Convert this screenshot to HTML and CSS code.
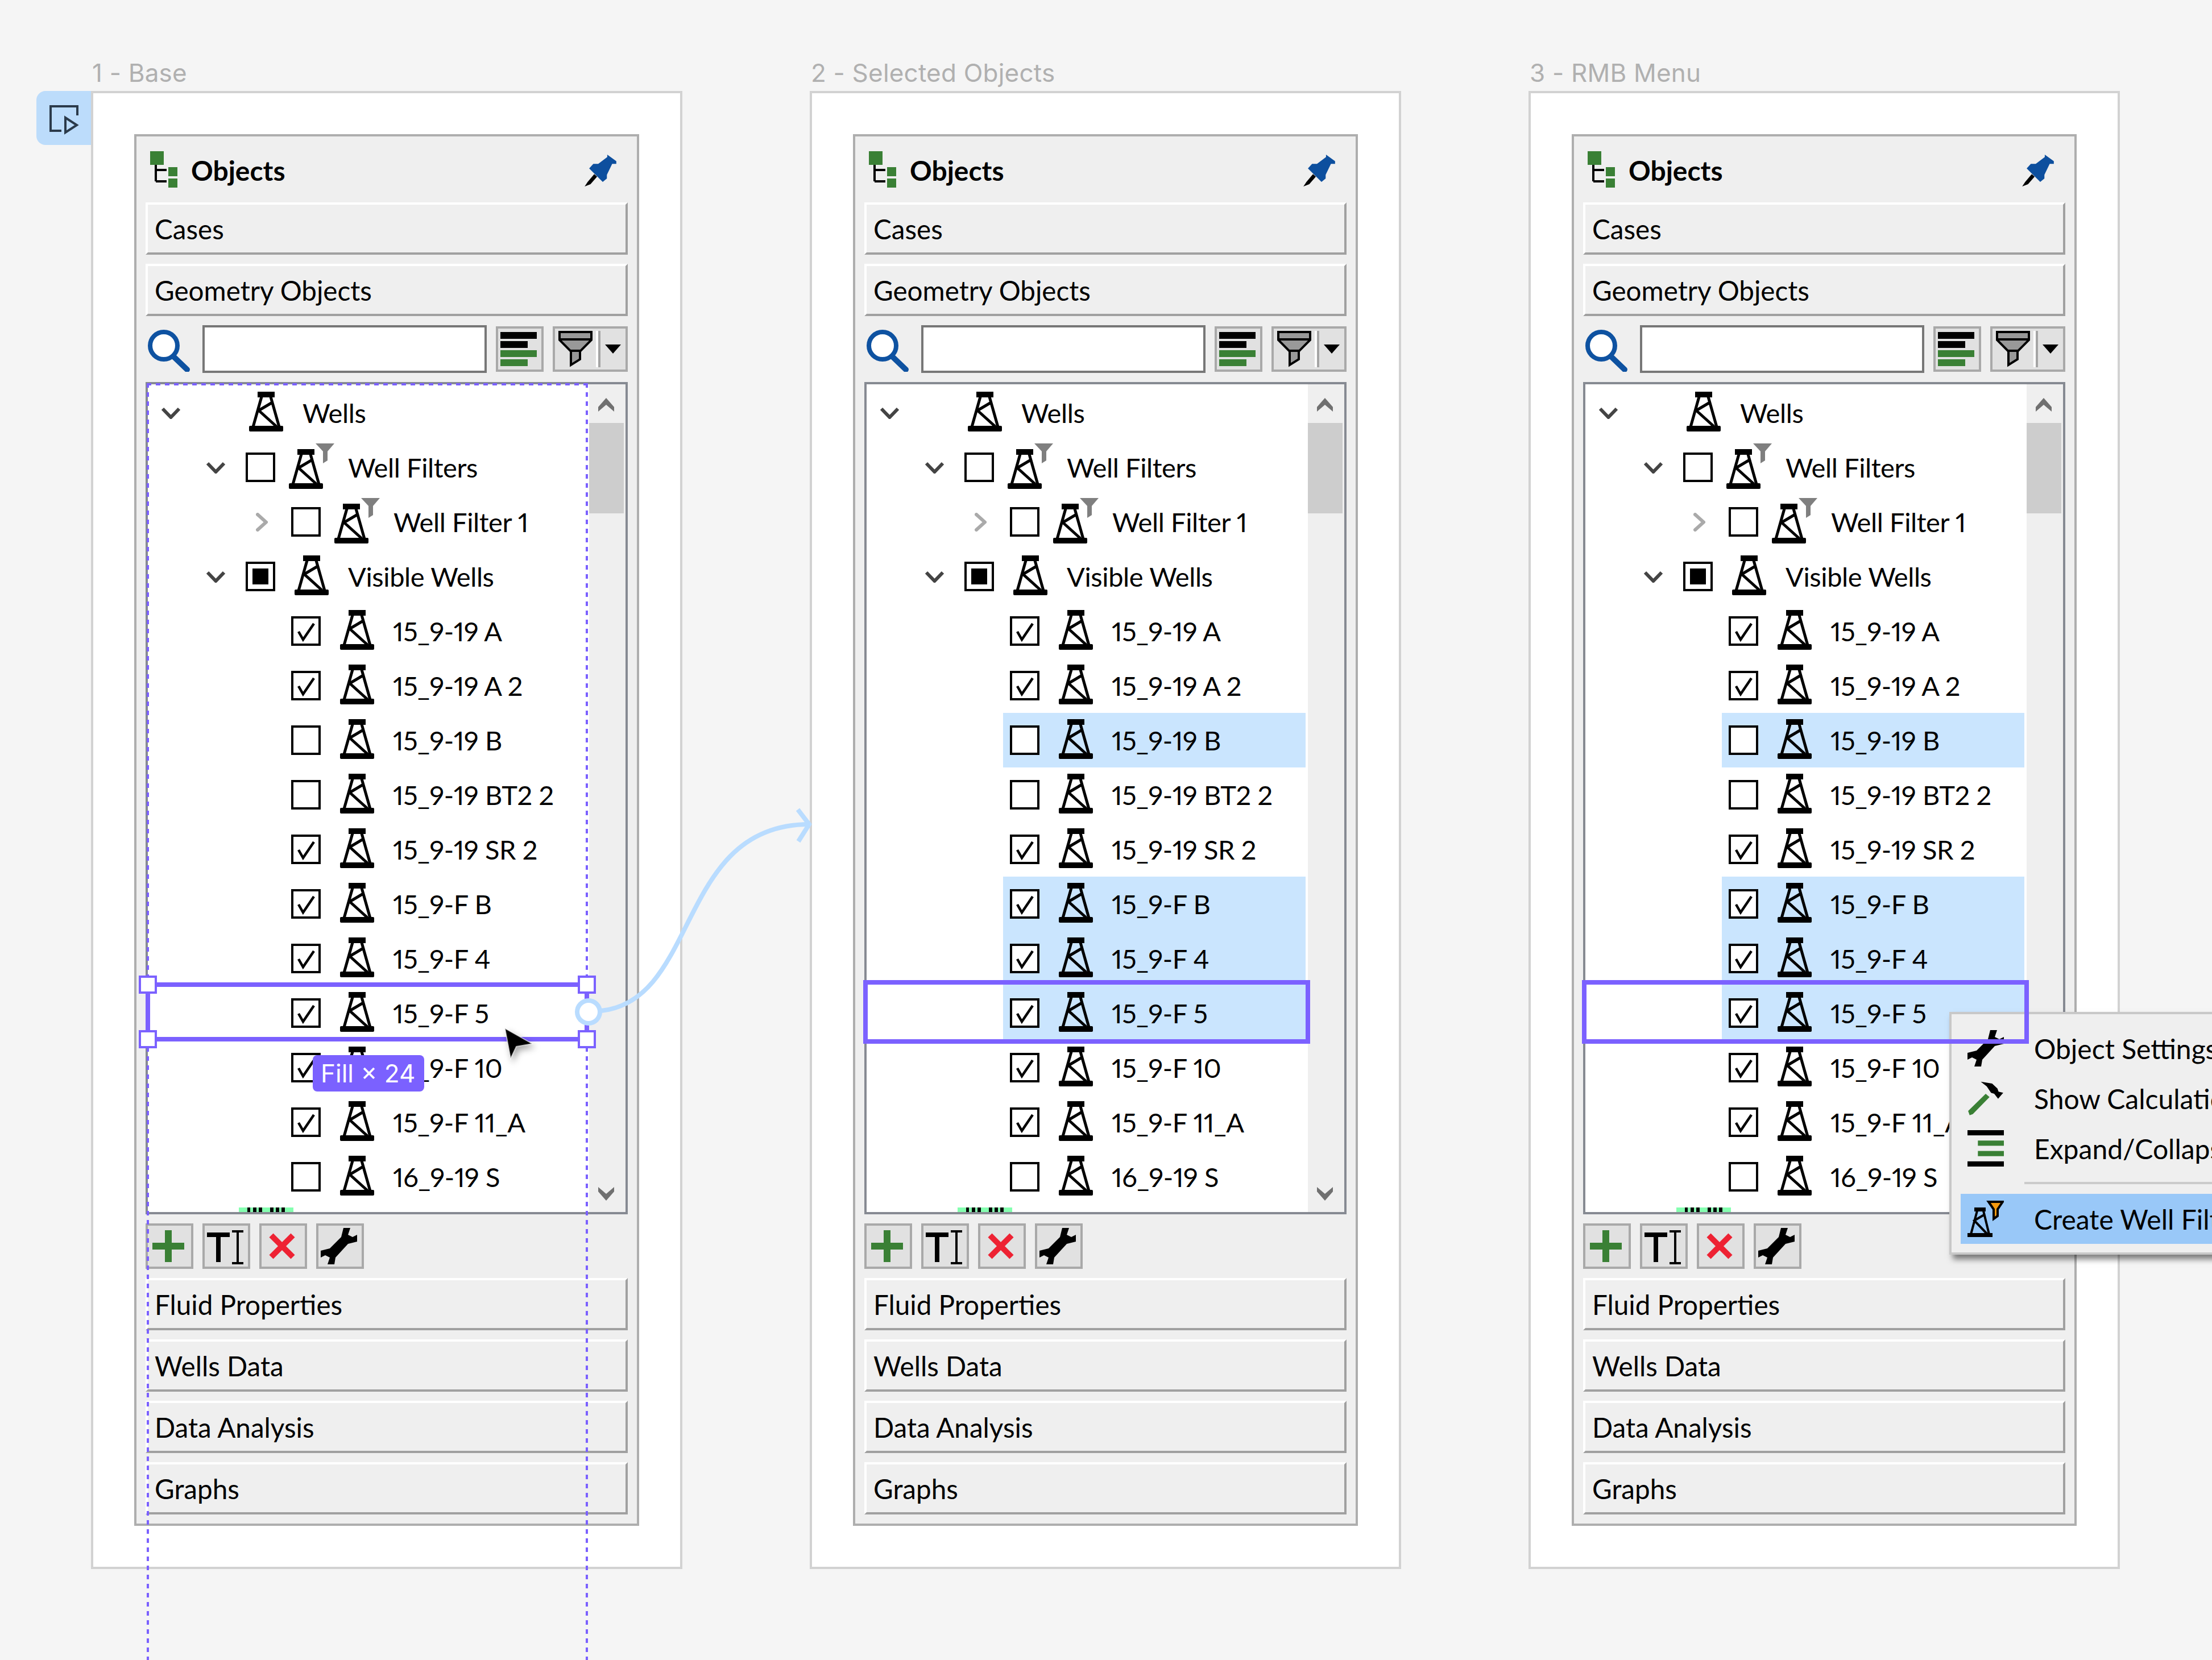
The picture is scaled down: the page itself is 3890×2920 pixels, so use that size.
FILE: index.html
```html
<!DOCTYPE html>
<html lang="en">
<head>
<meta charset="utf-8">
<title>Objects panel</title>
<link rel="stylesheet" href="styles.css">
</head>
<body>
<svg class="defs" width="0" height="0" aria-hidden="true">
  <symbol id="well" viewBox="0 0 60 70">
    <rect x="15" y="0" width="30" height="10"/>
    <rect x="0" y="60" width="60" height="10" rx="2"/>
    <path d="M22 9 7 62M38 9 53 62M39 20 17 33 48 61" fill="none" stroke="#000" stroke-width="5"/>
  </symbol>
  <symbol id="chk" viewBox="0 0 44 44"><path d="M9 23 17 37 36 9" fill="none" stroke="#000" stroke-width="4.500"/></symbol>
  <symbol id="down" viewBox="0 0 35 21"><path d="M3 3 17.500 18 32 3" fill="none" stroke="#444" stroke-width="6"/></symbol>
  <symbol id="right" viewBox="0 0 21 33"><path d="M3 3 18 16.500 3 30" fill="none" stroke="#aaa" stroke-width="6" stroke-linecap="round"/></symbol>
  <symbol id="funnelbadge" viewBox="0 0 33 35"><path d="M0 0H33L21 14V30L13 35V14Z" fill="#7f7f7f"/></symbol>
  <symbol id="wrench" viewBox="942 360 192 192"><path d="M1062 360H1098L1086 396 1110 408 1134 396V432L1086 444 1020 516 1014 552H978L990 516 966 504 942 516V480L990 468 1050 408Z"/></symbol>
  <symbol id="objicon" viewBox="0 0 48 64">
    <path d="M10 20V53M10 33H29M10 53H29" fill="none" stroke="#000" stroke-width="4"/>
    <rect width="24" height="24" fill="#3a8035"/><rect x="32" y="28" width="16" height="16" fill="#3a8035"/><rect x="32" y="48" width="16" height="16" fill="#3a8035"/>
  </symbol>
  <symbol id="pin" viewBox="684 155 168 169">
    <path d="M804 155 852 190V204H830L802 262V282L780 300 708 228 730 204H756L804 168Z" fill="#0d4f9e"/>
    <path d="M735 258 700 300 684 324 715 312 750 272Z"/>
  </symbol>
  <symbol id="lens" viewBox="0 0 74 74">
    <circle cx="28" cy="28" r="24" fill="#fff" stroke="#0e52a1" stroke-width="8"/>
    <path d="M45 47 69 70" stroke="#0e52a1" stroke-width="10" stroke-linecap="round"/>
  </symbol>
  <symbol id="bars" viewBox="0 0 64 60">
    <rect width="64" height="12"/><rect y="16" width="48" height="12"/>
    <rect y="32" width="64" height="12" fill="#3a8035"/><rect y="48" width="48" height="12" fill="#3a8035"/>
  </symbol>
  <symbol id="funnel" viewBox="0 0 60 64">
    <path d="M2 2H58V16L38 36V50L22 60V36L2 16Z" fill="#999" stroke="#000" stroke-width="4"/>
    <path d="M0 15H60M20 35H40" stroke="#000" stroke-width="4"/>
  </symbol>
  <symbol id="hammer" viewBox="425 600 170 162">
    <path d="M487 603 540 612 565 635 570 650 592 655 568 683 550 660 535 655 515 625Z"/>
    <path d="M510 660 528 675 450 755 435 760 428 740Z" fill="#3a8035"/>
  </symbol>
  <symbol id="expand" viewBox="0 0 56 56">
    <rect width="56" height="8"/><rect y="48" width="56" height="8"/>
    <rect x="16" y="16" width="40" height="8" fill="#3a8035"/><rect x="16" y="32" width="40" height="8" fill="#3a8035"/>
  </symbol>
  <symbol id="wellfilter" viewBox="0 0 64 64">
    <g transform="translate(0 12)"><rect x="12" width="20" height="7"/><rect y="45" width="44" height="7"/><path d="M17 6 6 47M28 6 38 47M29 13 12 23 34 46" fill="none" stroke="#000" stroke-width="4"/></g>
    <path d="M37 2H62L53 15V27L46 32V15Z" fill="#f59a10" stroke="#000" stroke-width="4"/>
  </symbol>
  <symbol id="plus" viewBox="0 0 76 72"><path d="M30 8H42V30H64V42H42V64H30V42H8V30H30Z" fill="#3a8035"/></symbol>
  <symbol id="rename" viewBox="0 0 76 72"><path d="M4 12H44V20H28V64H20V20H4ZM48 8H68V12H60V64H68V68H48V64H56V12H48Z"/></symbol>
  <symbol id="del" viewBox="0 0 76 72"><path d="M17 17 55 55M55 17 17 55" stroke="#ee2233" stroke-width="10" fill="none"/></symbol>
</svg>

<div class="canvas">

  <section class="col">
    <h2 class="title">1 - Base</h2>
    <div class="frame">
      <div class="tab"><svg width="96" height="96" viewBox="64 160 96 96"><path d="M136 203V187H89V230H108" fill="none" stroke="#2b3a4a" stroke-width="4"/><path d="M115 207V233L135 220Z" fill="none" stroke="#2b3a4a" stroke-width="4"/></svg></div>
      <div class="panel">
        <div class="head"><svg class="objicon"><use href="#objicon"/></svg><span class="head-t">Objects</span><svg class="pin"><use href="#pin"/></svg></div>
        <div class="sect">Cases</div>
        <div class="sect">Geometry Objects</div>
        <div class="search">
          <svg class="lens"><use href="#lens"/></svg><div class="input"></div>
          <div class="tbtn w84"><svg class="bars"><use href="#bars"/></svg></div>
          <div class="tbtn w132"><svg class="funnel"><use href="#funnel"/></svg><i class="vsep"></i><i class="tri"></i></div>
        </div>
        <div class="tree">
          <div class="list">
            <div class="row lv0"><svg class="ch"><use href="#down"/></svg><svg class="wl"><use href="#well"/></svg><span class="lb">Wells</span></div>
            <div class="row lv1"><svg class="ch"><use href="#down"/></svg><i class="cb"></i><span class="wb"><svg class="wl"><use href="#well"/></svg><svg class="fb"><use href="#funnelbadge"/></svg></span><span class="lb">Well Filters</span></div>
            <div class="row lv2"><svg class="cr"><use href="#right"/></svg><i class="cb"></i><span class="wb"><svg class="wl"><use href="#well"/></svg><svg class="fb"><use href="#funnelbadge"/></svg></span><span class="lb">Well Filter 1</span></div>
            <div class="row lv3"><svg class="ch"><use href="#down"/></svg><i class="cb tri-s"></i><svg class="wl"><use href="#well"/></svg><span class="lb">Visible Wells</span></div>
            <div class="row lf"><i class="cb"><svg><use href="#chk"/></svg></i><svg class="wl"><use href="#well"/></svg><span class="lb">15_9-19 A</span></div>
            <div class="row lf"><i class="cb"><svg><use href="#chk"/></svg></i><svg class="wl"><use href="#well"/></svg><span class="lb">15_9-19 A 2</span></div>
            <div class="row lf"><i class="cb"></i><svg class="wl"><use href="#well"/></svg><span class="lb">15_9-19 B</span></div>
            <div class="row lf"><i class="cb"></i><svg class="wl"><use href="#well"/></svg><span class="lb">15_9-19 BT2 2</span></div>
            <div class="row lf"><i class="cb"><svg><use href="#chk"/></svg></i><svg class="wl"><use href="#well"/></svg><span class="lb">15_9-19 SR 2</span></div>
            <div class="row lf"><i class="cb"><svg><use href="#chk"/></svg></i><svg class="wl"><use href="#well"/></svg><span class="lb">15_9-F B</span></div>
            <div class="row lf"><i class="cb"><svg><use href="#chk"/></svg></i><svg class="wl"><use href="#well"/></svg><span class="lb">15_9-F 4</span></div>
            <div class="row lf"><i class="cb"><svg><use href="#chk"/></svg></i><svg class="wl"><use href="#well"/></svg><span class="lb">15_9-F 5</span></div>
            <div class="row lf"><i class="cb"><svg><use href="#chk"/></svg></i><svg class="wl"><use href="#well"/></svg><span class="lb">15_9-F 10</span></div>
            <div class="row lf"><i class="cb"><svg><use href="#chk"/></svg></i><svg class="wl"><use href="#well"/></svg><span class="lb">15_9-F 11_A</span></div>
            <div class="row lf"><i class="cb"></i><svg class="wl"><use href="#well"/></svg><span class="lb">16_9-19 S</span></div>
          </div>
          <div class="sbar"><svg class="sup" viewBox="0 0 28 24"><path d="M0 16 14 0 28 16V24L14 12 0 24Z"/></svg><div class="thumb"></div><svg class="sdn" viewBox="0 0 28 24"><path d="M0 8 14 24 28 8V0L14 12 0 0Z"/></svg></div>
          <div class="grip"></div>
          <div class="guide"></div>
          <div class="rowline"></div>
          <i class="hd h-tl"></i><i class="hd h-tr"></i><i class="hd h-bl"></i><i class="hd h-br"></i>
          <div class="tip">Fill × 24</div>
          <svg class="cursor" viewBox="0 0 60 64"><path d="M8 5 56 32 28 37 18 58Z" fill="#000" stroke="#fff" stroke-opacity=".6" stroke-width="2"/></svg>
        </div>
        <div class="acts">
          <div class="tbtn w84"><svg class="ai"><use href="#plus"/></svg></div>
          <div class="tbtn w84"><svg class="ai"><use href="#rename"/></svg></div>
          <div class="tbtn w84"><svg class="ai"><use href="#del"/></svg></div>
          <div class="tbtn w84"><svg class="aw"><use href="#wrench"/></svg></div>
        </div>
        <div class="sect">Fluid Properties</div>
        <div class="sect">Wells Data</div>
        <div class="sect">Data Analysis</div>
        <div class="sect">Graphs</div>
      </div>
    </div>
  </section>

  <section class="col">
    <h2 class="title">2 - Selected Objects</h2>
    <div class="frame">
      <div class="panel">
        <div class="head"><svg class="objicon"><use href="#objicon"/></svg><span class="head-t">Objects</span><svg class="pin"><use href="#pin"/></svg></div>
        <div class="sect">Cases</div>
        <div class="sect">Geometry Objects</div>
        <div class="search">
          <svg class="lens"><use href="#lens"/></svg><div class="input"></div>
          <div class="tbtn w84"><svg class="bars"><use href="#bars"/></svg></div>
          <div class="tbtn w132"><svg class="funnel"><use href="#funnel"/></svg><i class="vsep"></i><i class="tri"></i></div>
        </div>
        <div class="tree">
          <div class="list">
            <div class="row lv0"><svg class="ch"><use href="#down"/></svg><svg class="wl"><use href="#well"/></svg><span class="lb">Wells</span></div>
            <div class="row lv1"><svg class="ch"><use href="#down"/></svg><i class="cb"></i><span class="wb"><svg class="wl"><use href="#well"/></svg><svg class="fb"><use href="#funnelbadge"/></svg></span><span class="lb">Well Filters</span></div>
            <div class="row lv2"><svg class="cr"><use href="#right"/></svg><i class="cb"></i><span class="wb"><svg class="wl"><use href="#well"/></svg><svg class="fb"><use href="#funnelbadge"/></svg></span><span class="lb">Well Filter 1</span></div>
            <div class="row lv3"><svg class="ch"><use href="#down"/></svg><i class="cb tri-s"></i><svg class="wl"><use href="#well"/></svg><span class="lb">Visible Wells</span></div>
            <div class="row lf"><i class="cb"><svg><use href="#chk"/></svg></i><svg class="wl"><use href="#well"/></svg><span class="lb">15_9-19 A</span></div>
            <div class="row lf"><i class="cb"><svg><use href="#chk"/></svg></i><svg class="wl"><use href="#well"/></svg><span class="lb">15_9-19 A 2</span></div>
            <div class="row lf sel"><i class="cb"></i><svg class="wl"><use href="#well"/></svg><span class="lb">15_9-19 B</span></div>
            <div class="row lf"><i class="cb"></i><svg class="wl"><use href="#well"/></svg><span class="lb">15_9-19 BT2 2</span></div>
            <div class="row lf"><i class="cb"><svg><use href="#chk"/></svg></i><svg class="wl"><use href="#well"/></svg><span class="lb">15_9-19 SR 2</span></div>
            <div class="row lf sel"><i class="cb"><svg><use href="#chk"/></svg></i><svg class="wl"><use href="#well"/></svg><span class="lb">15_9-F B</span></div>
            <div class="row lf sel"><i class="cb"><svg><use href="#chk"/></svg></i><svg class="wl"><use href="#well"/></svg><span class="lb">15_9-F 4</span></div>
            <div class="row lf sel"><i class="cb"><svg><use href="#chk"/></svg></i><svg class="wl"><use href="#well"/></svg><span class="lb">15_9-F 5</span></div>
            <div class="row lf"><i class="cb"><svg><use href="#chk"/></svg></i><svg class="wl"><use href="#well"/></svg><span class="lb">15_9-F 10</span></div>
            <div class="row lf"><i class="cb"><svg><use href="#chk"/></svg></i><svg class="wl"><use href="#well"/></svg><span class="lb">15_9-F 11_A</span></div>
            <div class="row lf"><i class="cb"></i><svg class="wl"><use href="#well"/></svg><span class="lb">16_9-19 S</span></div>
          </div>
          <div class="sbar"><svg class="sup" viewBox="0 0 28 24"><path d="M0 16 14 0 28 16V24L14 12 0 24Z"/></svg><div class="thumb"></div><svg class="sdn" viewBox="0 0 28 24"><path d="M0 8 14 24 28 8V0L14 12 0 0Z"/></svg></div>
          <div class="grip"></div>
          <div class="rowbox"></div>
        </div>
        <div class="acts">
          <div class="tbtn w84"><svg class="ai"><use href="#plus"/></svg></div>
          <div class="tbtn w84"><svg class="ai"><use href="#rename"/></svg></div>
          <div class="tbtn w84"><svg class="ai"><use href="#del"/></svg></div>
          <div class="tbtn w84"><svg class="aw"><use href="#wrench"/></svg></div>
        </div>
        <div class="sect">Fluid Properties</div>
        <div class="sect">Wells Data</div>
        <div class="sect">Data Analysis</div>
        <div class="sect">Graphs</div>
      </div>
    </div>
  </section>

  <section class="col">
    <h2 class="title">3 - RMB Menu</h2>
    <div class="frame">
      <div class="panel">
        <div class="head"><svg class="objicon"><use href="#objicon"/></svg><span class="head-t">Objects</span><svg class="pin"><use href="#pin"/></svg></div>
        <div class="sect">Cases</div>
        <div class="sect">Geometry Objects</div>
        <div class="search">
          <svg class="lens"><use href="#lens"/></svg><div class="input"></div>
          <div class="tbtn w84"><svg class="bars"><use href="#bars"/></svg></div>
          <div class="tbtn w132"><svg class="funnel"><use href="#funnel"/></svg><i class="vsep"></i><i class="tri"></i></div>
        </div>
        <div class="tree">
          <div class="list">
            <div class="row lv0"><svg class="ch"><use href="#down"/></svg><svg class="wl"><use href="#well"/></svg><span class="lb">Wells</span></div>
            <div class="row lv1"><svg class="ch"><use href="#down"/></svg><i class="cb"></i><span class="wb"><svg class="wl"><use href="#well"/></svg><svg class="fb"><use href="#funnelbadge"/></svg></span><span class="lb">Well Filters</span></div>
            <div class="row lv2"><svg class="cr"><use href="#right"/></svg><i class="cb"></i><span class="wb"><svg class="wl"><use href="#well"/></svg><svg class="fb"><use href="#funnelbadge"/></svg></span><span class="lb">Well Filter 1</span></div>
            <div class="row lv3"><svg class="ch"><use href="#down"/></svg><i class="cb tri-s"></i><svg class="wl"><use href="#well"/></svg><span class="lb">Visible Wells</span></div>
            <div class="row lf"><i class="cb"><svg><use href="#chk"/></svg></i><svg class="wl"><use href="#well"/></svg><span class="lb">15_9-19 A</span></div>
            <div class="row lf"><i class="cb"><svg><use href="#chk"/></svg></i><svg class="wl"><use href="#well"/></svg><span class="lb">15_9-19 A 2</span></div>
            <div class="row lf sel"><i class="cb"></i><svg class="wl"><use href="#well"/></svg><span class="lb">15_9-19 B</span></div>
            <div class="row lf"><i class="cb"></i><svg class="wl"><use href="#well"/></svg><span class="lb">15_9-19 BT2 2</span></div>
            <div class="row lf"><i class="cb"><svg><use href="#chk"/></svg></i><svg class="wl"><use href="#well"/></svg><span class="lb">15_9-19 SR 2</span></div>
            <div class="row lf sel"><i class="cb"><svg><use href="#chk"/></svg></i><svg class="wl"><use href="#well"/></svg><span class="lb">15_9-F B</span></div>
            <div class="row lf sel"><i class="cb"><svg><use href="#chk"/></svg></i><svg class="wl"><use href="#well"/></svg><span class="lb">15_9-F 4</span></div>
            <div class="row lf sel"><i class="cb"><svg><use href="#chk"/></svg></i><svg class="wl"><use href="#well"/></svg><span class="lb">15_9-F 5</span></div>
            <div class="row lf"><i class="cb"><svg><use href="#chk"/></svg></i><svg class="wl"><use href="#well"/></svg><span class="lb">15_9-F 10</span></div>
            <div class="row lf"><i class="cb"><svg><use href="#chk"/></svg></i><svg class="wl"><use href="#well"/></svg><span class="lb">15_9-F 11_A</span></div>
            <div class="row lf"><i class="cb"></i><svg class="wl"><use href="#well"/></svg><span class="lb">16_9-19 S</span></div>
          </div>
          <div class="sbar"><svg class="sup" viewBox="0 0 28 24"><path d="M0 16 14 0 28 16V24L14 12 0 24Z"/></svg><div class="thumb"></div><svg class="sdn" viewBox="0 0 28 24"><path d="M0 8 14 24 28 8V0L14 12 0 0Z"/></svg></div>
          <div class="grip"></div>
          <div class="menu">
            <div class="mi"><svg class="mic"><use href="#wrench"/></svg><span>Object Settings</span></div>
            <div class="mi"><svg class="mic"><use href="#hammer"/></svg><span>Show Calculation</span></div>
            <div class="mi"><svg class="mic"><use href="#expand"/></svg><span>Expand/Collapse</span></div>
            <div class="msep"></div>
            <div class="mi on"><svg class="mic"><use href="#wellfilter"/></svg><span>Create Well Filter</span></div>
          </div>
          <div class="rowbox"></div>
        </div>
        <div class="acts">
          <div class="tbtn w84"><svg class="ai"><use href="#plus"/></svg></div>
          <div class="tbtn w84"><svg class="ai"><use href="#rename"/></svg></div>
          <div class="tbtn w84"><svg class="ai"><use href="#del"/></svg></div>
          <div class="tbtn w84"><svg class="aw"><use href="#wrench"/></svg></div>
        </div>
        <div class="sect">Fluid Properties</div>
        <div class="sect">Wells Data</div>
        <div class="sect">Data Analysis</div>
        <div class="sect">Graphs</div>
      </div>
    </div>
  </section>

  <svg class="link" viewBox="1000 1400 440 420">
    <path d="M1057 1778C1230 1760 1190 1450 1423 1450" fill="none" stroke="#b9dcff" stroke-width="8"/>
    <path d="M1403 1424 1423 1450 1404 1480" fill="none" stroke="#b9dcff" stroke-width="8"/>
    <circle cx="1035" cy="1780" r="20" fill="#fff" stroke="#b9dcff" stroke-width="8"/>
  </svg>
</div>
</body>
</html>
```

FILE: styles.css
```css
* { box-sizing: border-box; }
html, body { margin: 0; padding: 0; height: 100%; overflow: hidden; background: #f5f5f5; }
.defs { position: absolute; }
svg { display: block; flex: none; overflow: visible; }
i { display: block; flex: none; }

.canvas { position: relative; display: flex; gap: 224px; width: 3890px; height: 2920px; padding-left: 160px; overflow: hidden; font-family: "Lato", sans-serif; font-variant-numeric: proportional-nums; color: #000; }
.col { flex: none; width: 1040px; }
.title { margin: 0; height: 160px; padding-top: 100px; padding-left: 2px; font: 400 44px/56px "Inter", sans-serif; letter-spacing: .2px; color: #b0b0b0; }
.frame { position: relative; width: 1040px; height: 2600px; padding: 72px; background: #fff; border: 4px solid #d2d2d2; }
.tab { position: absolute; left: -100px; top: -4px; width: 96px; height: 95px; background: #bcdcfb; border-radius: 16px 0 0 16px; }

.panel { display: flex; flex-direction: column; gap: 16px; width: 888px; height: 2448px; padding: 0 16px 16px; background: #efefef; border: 4px solid #aeaeae; }
.head { display: flex; align-items: center; height: 100px; padding: 20px 20px 0 8px; }
.objicon { width: 48px; height: 64px; margin-top: -4px; }
.head-t { margin-left: 24px; font-size: 48px; font-weight: 700; line-height: 1; }
.pin { width: 56px; height: 56px; margin-left: auto; }
.sect { display: flex; align-items: center; height: 92px; padding-left: 12px; border: 4px solid; border-color: #fff #a0a0a0 #a0a0a0 #fff; font-size: 47.6px; }

.search { display: flex; align-items: flex-start; height: 84px; }
.lens { width: 74px; height: 74px; margin: 8px 22px 0 4px; }
.input { width: 500px; height: 84px; background: #fff; border: 4px solid #777; margin-right: 16px; }
.tbtn { display: flex; align-items: center; flex: none; height: 80px; background: #e1e1e1; border: 4px solid #a9a9a9; }
.search .tbtn { margin-top: 2px; }
.w84 { width: 84px; }
.w132 { width: 132px; margin-left: 16px; }
.bars { width: 64px; height: 60px; margin-left: 4px; }
.funnel { width: 60px; height: 64px; margin-left: 6px; }
.vsep { width: 8px; height: 64px; margin-left: 6px; background: linear-gradient(to right, #fff 50%, #a4a4a4 50%); }
.tri { width: 0; height: 0; margin-left: 8px; border-style: solid; border-width: 16px 14px 0; border-color: #000 transparent transparent; }

.tree { position: relative; display: flex; height: 1464px; background: #fff; border: 4px solid #868a92; }
.list { flex: none; width: 776px; padding-top: 2px; }
.sbar { display: flex; flex-direction: column; width: 64px; background: #efefef; }
.sup, .sdn { width: 28px; height: 24px; margin-left: 16px; fill: #707070; }
.sup { margin-top: 24px; }
.sdn { margin-top: auto; margin-bottom: 20px; }
.thumb { width: 61px; height: 159px; margin-top: 20px; background: #cdcdcd; }
.grip { position: absolute; left: 160px; bottom: 0; width: 96px; height: 8px; background:
  linear-gradient(to right, transparent 15px, #000 15px 20px, transparent 20px 25px, #000 25px 31px, transparent 31px 35px, #000 35px 41px, transparent 41px 55px, #000 55px 61px, transparent 61px 65px, #000 65px 71px, transparent 71px 75px, #000 75px 81px, transparent 81px), #85ffb0; }

.row { position: relative; z-index: 0; display: flex; align-items: center; height: 96px; }
.row.sel::before { content: ""; position: absolute; z-index: -1; left: 240px; right: 4px; top: 0; bottom: 0; background: #cae5fe; }
.lb { font-size: 47px; line-height: 1; letter-spacing: -.4px; white-space: nowrap; }
.ch { width: 35px; height: 21px; }
.cr { width: 21px; height: 33px; }
.cb { position: relative; width: 52px; height: 52px; border: 4px solid #000; background: #fff; }
.cb svg { position: absolute; left: 0; top: 0; width: 44px; height: 44px; }
.tri-s::after { content: ""; position: absolute; left: 8px; top: 8px; width: 28px; height: 28px; background: #000; }
.wl { width: 60px; height: 70px; margin-top: -4px; }
.wb { position: relative; display: block; width: 60px; height: 70px; margin-top: 6px; }
.wb .wl { margin: 0; }
.fb { position: absolute; left: 47px; top: -10px; width: 33px; height: 35px; }

.lv0 { padding-left: 23px; }
.lv0 .wl { margin-left: 120px; }
.lv0 .lb { margin-left: 34px; }
.lv1, .lv3 { padding-left: 102px; }
.lv1 .cb, .lv3 .cb { margin-left: 35px; }
.lv1 .wb, .lv2 .wb { margin-left: 24px; }
.lv1 .lb, .lv2 .lb { margin-left: 44px; }
.lv2 { padding-left: 190px; }
.lv2 .cb { margin-left: 41px; }
.lv3 .wl { margin-left: 34px; }
.lv3 .lb { margin-left: 34px; }
.lf { padding-left: 252px; }
.lf .wl { margin-left: 34px; }
.lf .lb { margin-left: 33px; }

.guide { position: absolute; left: -2px; top: -2px; width: 776px; height: 2300px; background:
  repeating-linear-gradient(to right, #7b61ff 0 8px, transparent 8px 16px) left top / 100% 4px no-repeat,
  repeating-linear-gradient(to bottom, #7b61ff 0 8px, transparent 8px 16px) left top / 4px 100% no-repeat,
  repeating-linear-gradient(to bottom, #7b61ff 0 8px, transparent 8px 16px) right top / 4px 100% no-repeat; }
.rowline { position: absolute; left: -4px; top: 1052px; width: 780px; height: 104px; border: 8px solid #7b61ff; }
.hd { position: absolute; width: 32px; height: 32px; background: #fff; border: 4px solid #7b61ff; }
.h-tl { left: -16px; top: 1040px; }
.h-tr { left: 756px; top: 1040px; }
.h-bl { left: -16px; top: 1136px; }
.h-br { left: 756px; top: 1136px; }
.rowbox { position: absolute; left: -6px; top: 1048px; width: 786px; height: 112px; border: 8px solid #7b61ff; }
.tip { position: absolute; left: 290px; top: 1180px; width: 196px; height: 64px; padding-left: 14px; background: #7b61ff; border-radius: 8px; color: #fff; font: 400 44px/64px "Inter", sans-serif; white-space: nowrap; }
.cursor { position: absolute; left: 620px; top: 1128px; width: 60px; height: 64px; filter: drop-shadow(4px 6px 6px rgba(0,0,0,.35)); }

.acts { display: flex; gap: 16px; }
.ai { width: 76px; height: 72px; }
.aw { width: 64px; height: 64px; margin-left: 4px; }

.menu { position: absolute; left: 640px; top: 1104px; width: 700px; height: 427px; padding: 16px 16px 15px; background: #efefef; border: 4px solid #c8c8c8; box-shadow: 6px 8px 10px rgba(0,0,0,.5); }
.mi { display: flex; align-items: center; height: 88px; padding-left: 12px; font-size: 48px; white-space: nowrap; }
.mi.on { background: #99c8f8; }
.mic { width: 64px; height: 64px; }
.mi span { margin-left: 53px; }
.msep { height: 4px; margin: 15px 0 17px 112px; background: #cbcbcb; }

.link { position: absolute; left: 1000px; top: 1400px; width: 440px; height: 420px; }
```
